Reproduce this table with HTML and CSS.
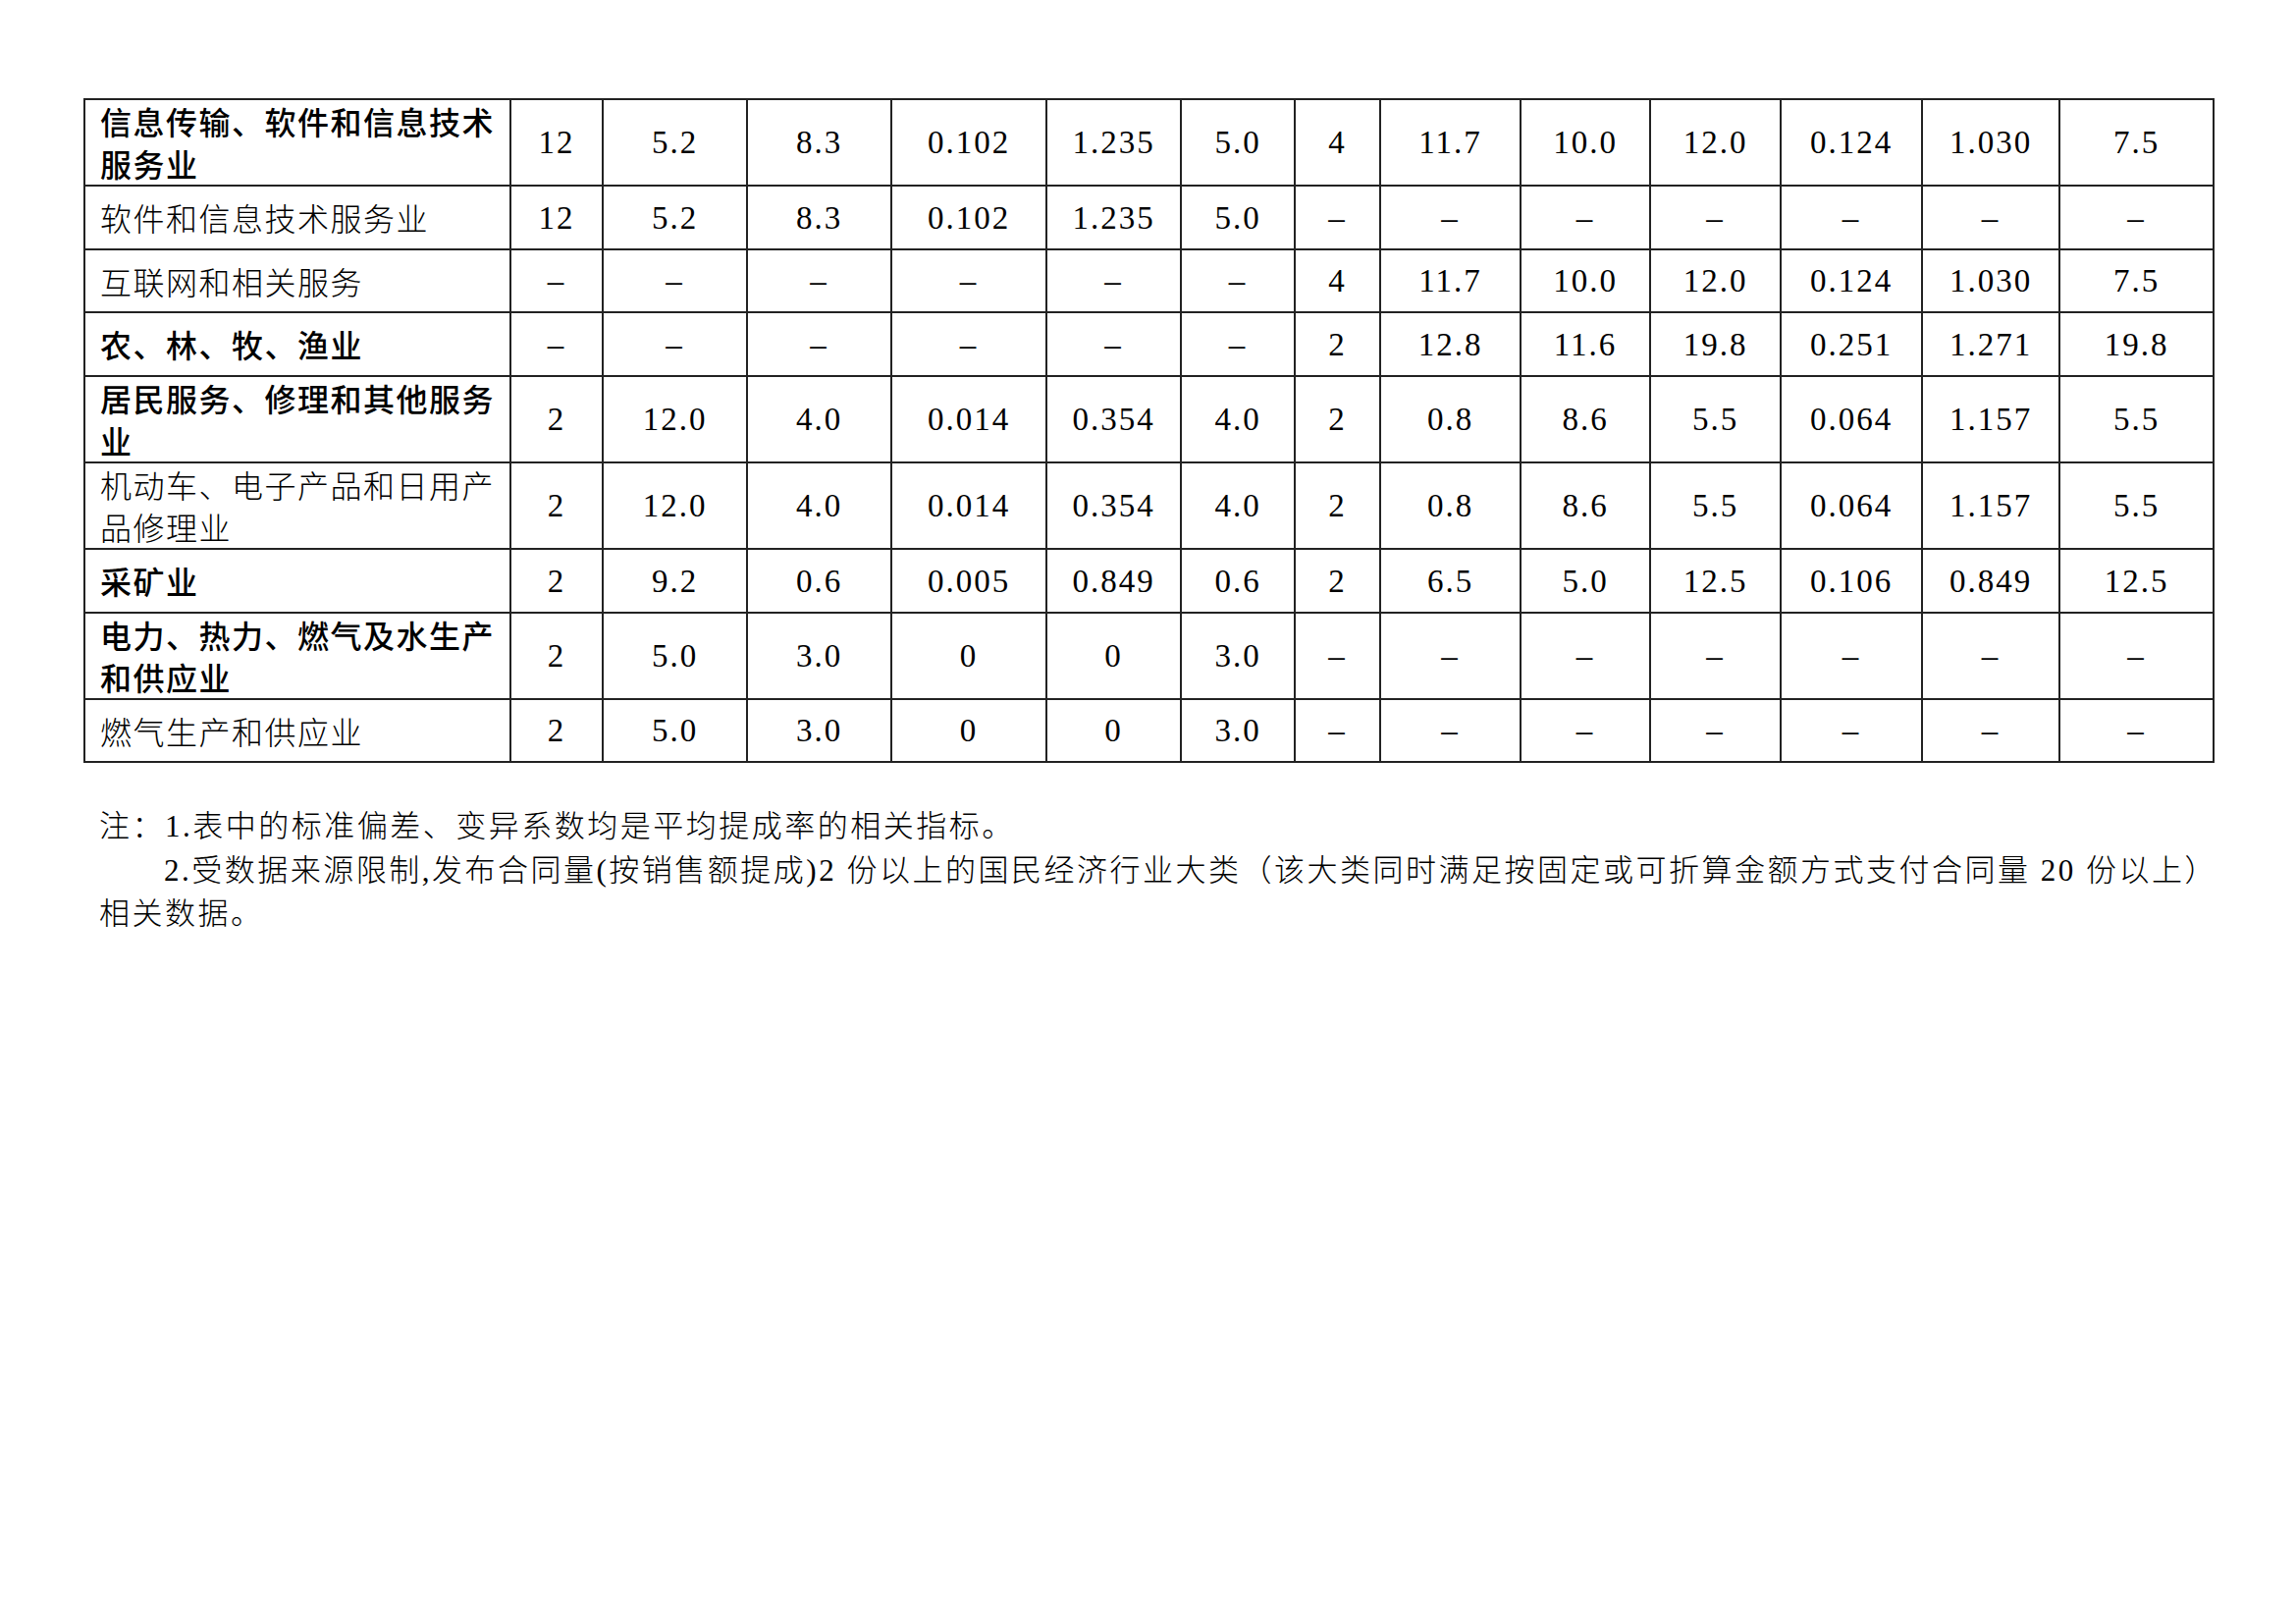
FILE: index.html
```html
<!DOCTYPE html>
<html lang="zh-CN">
<head>
<meta charset="utf-8">
<title>提成率统计表</title>
<link rel="stylesheet" href="styles.css">
</head>
<body>
<div class="page">
  <table class="data">
    <colgroup>
      <col class="c0"><col class="c1"><col class="c2"><col class="c3"><col class="c4"><col class="c5"><col class="c6"><col class="c7"><col class="c8"><col class="c9"><col class="c10"><col class="c11"><col class="c12"><col class="c13">
    </colgroup>
    <tbody>
      <tr class="r88">
        <td class="name bold">信息传输、软件和信息技术服务业</td>
        <td>12</td><td>5.2</td><td>8.3</td><td>0.102</td><td>1.235</td><td>5.0</td>
        <td>4</td><td>11.7</td><td>10.0</td><td>12.0</td><td>0.124</td><td>1.030</td><td>7.5</td>
      </tr>
      <tr class="r65">
        <td class="name light">软件和信息技术服务业</td>
        <td>12</td><td>5.2</td><td>8.3</td><td>0.102</td><td>1.235</td><td>5.0</td>
        <td>–</td><td>–</td><td>–</td><td>–</td><td>–</td><td>–</td><td>–</td>
      </tr>
      <tr class="r64">
        <td class="name light">互联网和相关服务</td>
        <td>–</td><td>–</td><td>–</td><td>–</td><td>–</td><td>–</td>
        <td>4</td><td>11.7</td><td>10.0</td><td>12.0</td><td>0.124</td><td>1.030</td><td>7.5</td>
      </tr>
      <tr class="r65">
        <td class="name bold">农、林、牧、渔业</td>
        <td>–</td><td>–</td><td>–</td><td>–</td><td>–</td><td>–</td>
        <td>2</td><td>12.8</td><td>11.6</td><td>19.8</td><td>0.251</td><td>1.271</td><td>19.8</td>
      </tr>
      <tr class="r88">
        <td class="name bold">居民服务、修理和其他服务业</td>
        <td>2</td><td>12.0</td><td>4.0</td><td>0.014</td><td>0.354</td><td>4.0</td>
        <td>2</td><td>0.8</td><td>8.6</td><td>5.5</td><td>0.064</td><td>1.157</td><td>5.5</td>
      </tr>
      <tr class="r88">
        <td class="name light">机动车、电子产品和日用产品修理业</td>
        <td>2</td><td>12.0</td><td>4.0</td><td>0.014</td><td>0.354</td><td>4.0</td>
        <td>2</td><td>0.8</td><td>8.6</td><td>5.5</td><td>0.064</td><td>1.157</td><td>5.5</td>
      </tr>
      <tr class="r65">
        <td class="name bold">采矿业</td>
        <td>2</td><td>9.2</td><td>0.6</td><td>0.005</td><td>0.849</td><td>0.6</td>
        <td>2</td><td>6.5</td><td>5.0</td><td>12.5</td><td>0.106</td><td>0.849</td><td>12.5</td>
      </tr>
      <tr class="r88">
        <td class="name bold">电力、热力、燃气及水生产和供应业</td>
        <td>2</td><td>5.0</td><td>3.0</td><td>0</td><td>0</td><td>3.0</td>
        <td>–</td><td>–</td><td>–</td><td>–</td><td>–</td><td>–</td><td>–</td>
      </tr>
      <tr class="r64">
        <td class="name light">燃气生产和供应业</td>
        <td>2</td><td>5.0</td><td>3.0</td><td>0</td><td>0</td><td>3.0</td>
        <td>–</td><td>–</td><td>–</td><td>–</td><td>–</td><td>–</td><td>–</td>
      </tr>
    </tbody>
  </table>

  <div class="notes">
    <p class="note">注：1.表中的标准偏差、变异系数均是平均提成率的相关指标。</p>
    <p class="note indent">2.受数据来源限制,发布合同量(按销售额提成)2 份以上的国民经济行业大类（该大类同时满足按固定或可折算金额方式支付合同量 20 份以上）<br>相关数据。</p>
  </div>
</div>
</body>
</html>
```

FILE: styles.css
```css
html, body {
  margin: 0;
  padding: 0;
  background: #ffffff;
}

.page {
  padding: 100px 0 0 85px;
  color: #000;
}

.data {
  border-collapse: collapse;
  table-layout: fixed;
  width: 2169px;
}

.data td {
  border: 2px solid #222;
  padding: 0;
  text-align: center;
  vertical-align: middle;
  font-family: "Liberation Serif", "Noto Sans CJK SC", serif;
  font-size: 33px;
  letter-spacing: 2px;
  line-height: 40px;
}

.c0 { width: 434px; }
.c1 { width: 94px; }
.c2 { width: 147px; }
.c3 { width: 147px; }
.c4 { width: 158px; }
.c5 { width: 137px; }
.c6 { width: 116px; }
.c7 { width: 87px; }
.c8 { width: 143px; }
.c9 { width: 132px; }
.c10 { width: 133px; }
.c11 { width: 144px; }
.c12 { width: 140px; }
.c13 { width: 157px; }

.r88 { height: 88px; }
.r65 { height: 65px; }
.r64 { height: 64px; }

.data td.name {
  text-align: left;
  padding: 0 4px 0 15px;
  font-family: "Noto Sans CJK SC", sans-serif;
  font-size: 32px;
  letter-spacing: 1.5px;
  line-height: 43px;
}

.data td.bold {
  font-weight: 500;
}

.data td.light {
  font-weight: 300;
}

.notes {
  margin-top: 43px;
  padding-left: 16px;
  width: 2153px;
}

.note {
  margin: 0;
  font-family: "Liberation Serif", "Noto Sans CJK SC", serif;
  font-weight: 300;
  font-size: 31px;
  letter-spacing: 2.5px;
  line-height: 44.5px;
  white-space: nowrap;
}

.note.indent {
  text-indent: 66px;
}
```
